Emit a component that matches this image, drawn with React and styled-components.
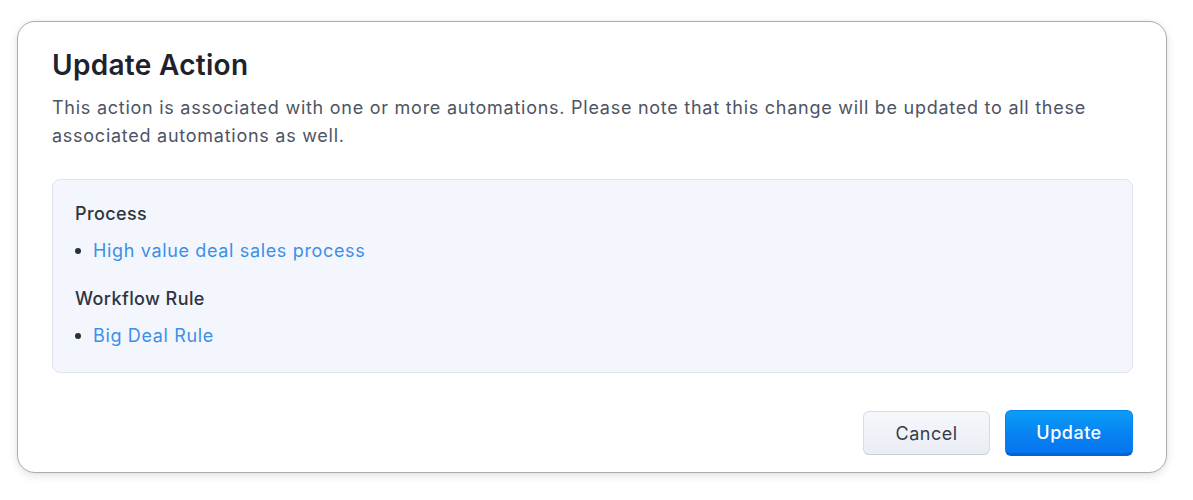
import React from "react";
import styled, { createGlobalStyle } from "styled-components";

const Global = createGlobalStyle`
  html, body { margin: 0; padding: 0; background: #ffffff; }
  body { font-family: Inter, "Noto Sans", sans-serif; -webkit-font-smoothing: antialiased; }
  * { box-sizing: border-box; }
`;

const Page = styled.div`
  width: 1193px;
  height: 500px;
  padding: 21px 0 0 17px;
`;

const Dialog = styled.div`
  width: 1150px;
  height: 452px;
  background: #ffffff;
  border: 1px solid #a9acb2;
  border-radius: 18px;
  box-shadow: 0 3px 10px rgba(0, 0, 0, 0.1), 0 0 4px rgba(0, 0, 0, 0.05);
  padding: 25px 33px 16px 34px;
  display: flex;
  flex-direction: column;
`;

const Title = styled.h2`
  margin: 0;
  font-size: 28px;
  line-height: 36px;
  font-weight: 600;
  color: #1e222c;
  letter-spacing: 0.3px;
`;

const Description = styled.p`
  margin: 11px 0 0;
  font-size: 18px;
  line-height: 28px;
  color: #4d5464;
  font-weight: 400;
  letter-spacing: 0.74px;
`;

const InfoBox = styled.div`
  margin-top: 29px;
  background: #f3f6fd;
  border: 1px solid #dfe5ef;
  border-radius: 8px;
  padding: 22px 22px 24px;
  display: flex;
  flex-direction: column;
`;

const Group = styled.div`
  display: flex;
  flex-direction: column;
  gap: 13px;
  & + & { margin-top: 24px; }
`;

const GroupHeading = styled.div`
  font-size: 18px;
  line-height: 24px;
  font-weight: 500;
  color: #2f3441;
  letter-spacing: 0.4px;
`;

const Item = styled.div`
  display: flex;
  align-items: center;
  gap: 12px;
  font-size: 18px;
  line-height: 24px;
`;

const Bullet = styled.span`
  width: 6px;
  height: 6px;
  border-radius: 50%;
  background: #2a2e38;
  flex: none;
  margin-left: 0;
`;

const Link = styled.a`
  color: #3d8fe8;
  text-decoration: none;
  cursor: pointer;
  letter-spacing: 0.65px;
`;

const Footer = styled.div`
  margin-top: auto;
  display: flex;
  justify-content: flex-end;
  align-items: center;
  gap: 15px;
`;

const Button = styled.button`
  height: ${(p) => (p.$primary ? "46px" : "44px")};
  width: ${(p) => (p.$primary ? "128px" : "127px")};
  border-radius: 6px;
  font-family: inherit;
  font-size: 18px;
  font-weight: ${(p) => (p.$primary ? 500 : 400)};
  letter-spacing: 0.5px;
  cursor: pointer;
  border: 1px solid ${(p) => (p.$primary ? "#0a82ee" : "#d4dbe6")};
  border-bottom: ${(p) => (p.$primary ? "3px solid #0563cc" : "1px solid #c9d0dc")};
  color: ${(p) => (p.$primary ? "#ffffff" : "#373c48")};
  background: ${(p) =>
    p.$primary
      ? "linear-gradient(180deg, #0a9ef6 0%, #0780f2 60%, #0676ee 100%)"
      : "linear-gradient(180deg, #f5f7fb 0%, #e9edf4 100%)"};
`;

export default function App() {
  return (
    <>
      <Global />
      <Page>
        <Dialog>
          <Title>Update Action</Title>
          <Description>
            This action is associated with one or more automations. Please note that this change will be updated to all these associated automations as well.
          </Description>
          <InfoBox>
            <Group>
              <GroupHeading>Process</GroupHeading>
              <Item>
                <Bullet />
                <Link>High value deal sales process</Link>
              </Item>
            </Group>
            <Group>
              <GroupHeading>Workflow Rule</GroupHeading>
              <Item>
                <Bullet />
                <Link>Big Deal Rule</Link>
              </Item>
            </Group>
          </InfoBox>
          <Footer>
            <Button>Cancel</Button>
            <Button $primary>Update</Button>
          </Footer>
        </Dialog>
      </Page>
    </>
  );
}
